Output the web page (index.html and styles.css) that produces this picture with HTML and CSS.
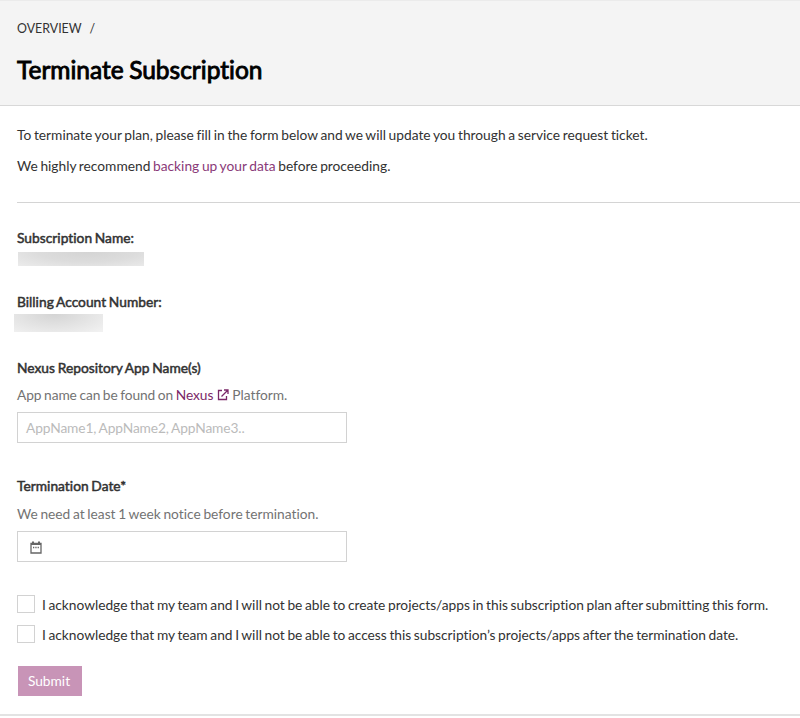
FILE: index.html
```html
<!DOCTYPE html>
<html lang="en"><head><meta charset="utf-8"><title>Terminate Subscription</title><link rel="stylesheet" href="styles.css"></head>
<body>
<header class="header"><nav class="crumbs"><span>OVERVIEW</span><span class="slash">/</span></nav><h1>Terminate Subscription</h1></header>
<main>
<section class="intro"><p class="intro-main">To terminate your plan, please fill in the form below and we will update you through a service request ticket.</p><p class="recommend">We highly recommend <a>backing up your data</a> before proceeding.</p></section>
<form>
<div class="field subscription"><h2>Subscription Name:</h2><div class="redacted"></div></div>
<div class="field billing"><h2>Billing Account Number:</h2><div class="redacted"></div></div>
<div class="field apps"><h2>Nexus Repository App Name(s)</h2><p class="hint"><span class="found">App name can be found on <a>Nexus</a></span><svg class="ext" viewBox="0 0 12 12"><path d="M5 1.500H1.500v9h8V7M7 1h4v4M11 1 4.500 7.500"/></svg><span>Platform.</span></p><div class="input"><span class="placeholder">AppName1, AppName2, AppName3..</span></div></div>
<div class="field date"><h2>Termination Date*</h2><p class="hint"><span class="notice">We need at least 1 week notice before termination.</span></p><div class="input"><svg class="cal" viewBox="0 0 12 13"><path d="M1 2.500h10v9.500H1z"/><path d="M1 3h10M3 .5v2M9 .5v2" stroke-width="2"/><path d="M3 6.500h6" stroke-dasharray="1.300 1"/></svg></div></div>
<label class="check"><i></i><span>I acknowledge that my team and I will not be able to create projects/apps in this subscription plan after submitting this form.</span></label>
<label class="check"><i></i><span>I acknowledge that my team and I will not be able to access this subscription’s projects/apps after the termination date.</span></label>
<button type="button">Submit</button>
</form></main>
</body></html>
```
FILE: styles.css
```css
*{box-sizing:border-box}
body{margin:0;height:718px;overflow:hidden;font:13.750px/20px Lato,sans-serif;word-spacing:-.85px;font-variant-ligatures:none;color:#323232;background:#fff}
h1,h2,p{margin:0}
a{color:#7b2868}
.header{height:106px;background:#f4f4f4;border-top:1px solid #ebebeb;border-bottom:1px solid #d8d8d8;padding:18px 17px 0}
.crumbs{display:flex;gap:8px;font-size:12.400px;line-height:20px}
h1{font-size:24.500px;font-weight:400;-webkit-text-stroke:.9px #000;line-height:30px;margin-top:16px;color:#000}
main{height:610px;border-bottom:2px solid #e3e3e3;padding-left:17px;white-space:nowrap}
.intro{height:97px;padding-top:19px;border-bottom:1px solid #d4d4d4}
.recommend{margin-top:11px}
.recommend a{color:#8a3a79}
h2{font-size:13.750px;font-weight:400;-webkit-text-stroke:.5px #323232;line-height:20px;letter-spacing:.02px}
.subscription{height:64px;margin-top:25px}
.billing{height:66px}
.redacted{width:126px;height:14px;margin:4px 0 0 1px;background:radial-gradient(ellipse at 55% 0%,#d4d4d4,#dcdcdc 50%,#efefef 110%)}
.billing .redacted{width:89px;height:18px;margin:2px 0 0 -3px;background:radial-gradient(ellipse at 45% 0%,#d4d4d4,#f1f1f1 95%)}
.apps{height:118px}
.hint{display:flex;color:#737373;margin-top:7px;height:20px}
.found{letter-spacing:-.08px}
.ext{width:12px;height:12px;margin:4px 3px 0 4px;fill:none;stroke:#7b2868;stroke-width:1.300}
.input{width:330px;height:31px;margin-top:7px;border:1px solid #d2d2d2;padding:5px 8px;display:flex;align-items:center}
.placeholder{color:#bbb;letter-spacing:-.1px}
.date{height:118px}
.date .hint{margin-top:8px}
.cal{width:12px;height:13px;margin:1px 0 0 4px;fill:none;stroke:#666;stroke-width:1.300}
.check{display:flex;align-items:center;height:20px;gap:7px;margin-bottom:10px;letter-spacing:-.015px}
.check i{flex:none;width:18px;height:18px;border:1px solid #d2d2d2}
.check span{position:relative;top:.5px}
button{display:block;width:64px;height:30px;border:0;padding:0 2px 1px 0;margin:22px 0 0 1px;background:#c894b7;color:#fff;font:13.750px Lato,sans-serif}
```
